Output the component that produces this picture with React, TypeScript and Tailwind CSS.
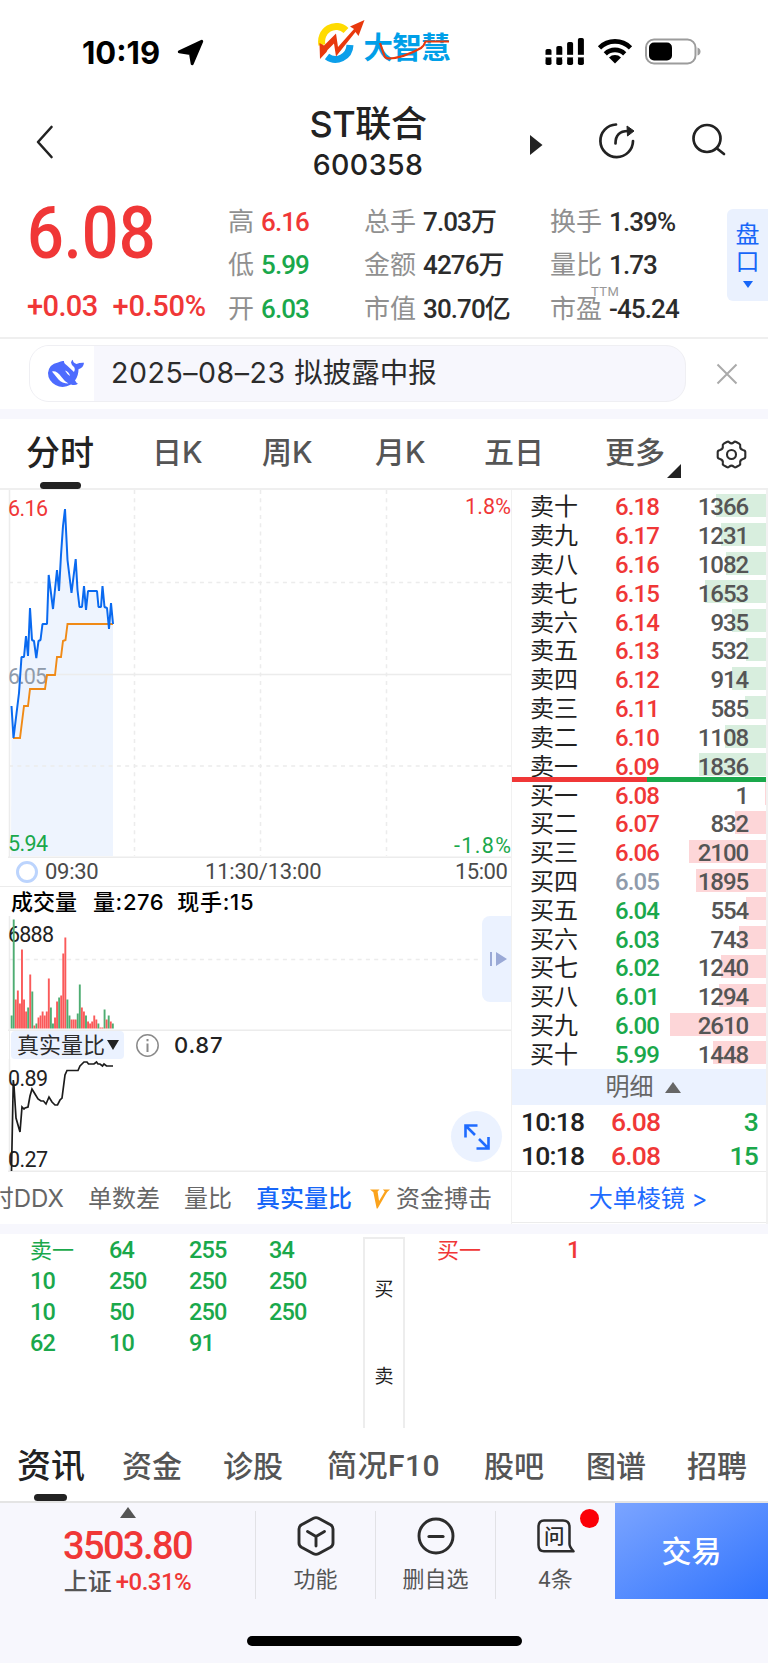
import { ReactNode } from 'react'

const RED = '#f03737'
const GREEN = '#1aa84b'

const asks = [
    ['卖十', '6.18', 1366],
    ['卖九', '6.17', 1231],
    ['卖八', '6.16', 1082],
    ['卖七', '6.15', 1653],
    ['卖六', '6.14', 935],
    ['卖五', '6.13', 532],
    ['卖四', '6.12', 914],
    ['卖三', '6.11', 585],
    ['卖二', '6.10', 1108],
    ['卖一', '6.09', 1836],
] as const

const bids = [
    ['买一', '6.08', 1],
    ['买二', '6.07', 832],
    ['买三', '6.06', 2100],
    ['买四', '6.05', 1895],
    ['买五', '6.04', 554],
    ['买六', '6.03', 743],
    ['买七', '6.02', 1240],
    ['买八', '6.01', 1294],
    ['买九', '6.00', 2610],
    ['买十', '5.99', 1448],
] as const

// sign is the direction of the minute, magnitude the bar height
const volumes = [
    -13, -109, 29, 38, 25, 79, 29, 17, -21, 54, -37, 3, -5, 11, 13, 17, 13, 17, 50, -21, -5, 11, 27, -31, 33,
    75, 91, -29, -13, 9, 9, 9, -15, -44, 21, 17, -13, 7, 5, 7, 13, 9, -5, 1, 1, -19, 9, -13, 7, -5,
]

const priceLine =
    '11.5,216 13.5,248 19,203 21.5,167 24,167 26,146 28,166 30,118 32,150 34,151 36.3,168 38.5,151 40.5,150 42.5,134 47,134 48.7,85 53,119 57,80 59,101 61,65 63,36 65,19 67.5,70 71.5,103 75.7,69 77.5,100 79.5,117 82,117 84,96 86,120 88,101 97,101 98.5,117 101,117 102.5,96 104.5,117 107,118 109,139 111,113 113,134'
const avgLine =
    '13,248 20,248 24,216 28,216 30,199 45,199 47,185 55,185 57,167 61,167 63,151 65.5,150 67.5,134 113,134'
const ratioLine =
    '11.5,141 13.3,50 14,56 16,88 20,102 22,77 24,79 25,78 28,77 30,66 32,59 35,64 38,69 41,71 43.5,71 46,74 49,67 52,72 55,75 57.5,75 60,70 62,68 65,45 67,40.5 78,40.5 80,36 84,32 87,32 88.5,34 94,34 96.5,32 98,34 100,34 102.5,36 104,34 106.5,36 113,36'

const num = "font-['Roboto','Noto_Sans_CJK_SC',sans-serif]"

function priceColor(p: string) {
    if (Number(p) > 6.05) return 'text-[#f03737]'
    return p === '6.05' ? 'text-[#8f9bab]' : 'text-[#1aa84b]'
}

function StatusBar() {
    return (
        <div className="flex h-[97px] items-start pl-[82px]">
            <span className="mt-[37px] w-[95px] text-[31px] leading-8 font-bold text-black">10:19</span>
            <svg className="mt-[39px]" width="27" height="27" viewBox="0 0 27 27">
                <path d="M24.700 2.300 15.200 24.700 13.500 14.500 2.300 12.800Z" fill="#000" stroke="#000" strokeWidth="3" strokeLinejoin="round" />
            </svg>
            <svg className="mt-[18px] ml-[114px]" width="136" height="50" viewBox="0 0 136 50">
                <path d="M4 27A14.500 15 0 0 1 28 12.500" fill="none" stroke="#ffdb00" strokeWidth="7" />
                <path d="M32 27A14.500 15 0 0 1 9 38.500" fill="none" stroke="#0c9fea" strokeWidth="7" />
                <path d="M2 41 1.500 25 6 27.500 18 15.500 20 29 36 11 32 8.500 46.500 2 40.500 18 37.500 14 18 38.500 16 25.500 9.500 32 8.500 34Z" fill="#e8380d" />
                <text x="45.500" y="40" textLength="87" className="font-['Noto_Sans_CJK_SC',sans-serif] text-[29.500px] font-bold" fill="#009fe8">大智慧</text>
                <path d="M62 25 66.500 38Q67 40 71 40.500Q85 40 103 30Q106 28 107.500 23.500H131" fill="none" stroke="#e8380d" strokeWidth="2.200" />
            </svg>
            <svg className="mt-[37px] ml-[91px]" width="40" height="29" viewBox="0 0 40 29">
                {[0, 1, 2, 3].map((i) => (
                    <g key={i}>
                        <rect x={i * 10.8 + 0.5} y={[12, 9, 5, 1][i]} width="6" height={[12, 15, 19, 23][i] - 1.5} rx="1.800" />
                        <rect x={i * 10.8 + 0.5} y="21" width="6" height="7" rx="1.800" />
                    </g>
                ))}
                <rect y="17.800" width="40" height="2.600" fill="#fff" />
            </svg>
            <svg className="mt-[38px] ml-3" width="36" height="26" viewBox="0 0 36 26">
                <g fill="none" stroke="#000" strokeWidth="4.600">
                    <path d="M2.500 9.800A22 22 0 0 1 33.500 9.800" />
                    <path d="M8.300 15.800A14 14 0 0 1 27.700 15.800" />
                </g>
                <path d="M18 25.500 12 19.500A8.500 8.500 0 0 1 24 19.500Z" />
            </svg>
            <svg className="mt-[38px] ml-3" width="56" height="27" viewBox="0 0 56 27">
                <rect x="1" y="1.500" width="49.500" height="24" rx="8" fill="none" stroke="#9c9c9c" strokeWidth="2" />
                <rect x="4" y="4.500" width="23" height="18" rx="5" />
                <path d="M52.500 9.500Q55.500 10.500 55.500 13.500T52.500 17.500Z" fill="#9c9c9c" />
            </svg>
        </div>
    )
}

function TitleBar() {
    return (
        <div className="flex h-[92px] items-start text-[#222]">
            <svg className="mt-7 ml-[35px]" width="20" height="34" viewBox="0 0 20 34">
                <path d="M16.500 2 3 17 16.500 32" fill="none" stroke="currentColor" strokeWidth="2.600" strokeLinecap="round" strokeLinejoin="round" />
            </svg>
            <div className="ml-[213px] w-[200px] text-center">
                <div className="mt-[7px] text-[36px] leading-[40px] font-medium tracking-[-0.400px]">ST联合</div>
                <div className="mt-[5px] text-[28.500px] leading-[32px] font-medium tracking-[0.400px]">600358</div>
            </div>
            <svg className="mt-[37px] ml-[62px]" width="13" height="22" viewBox="0 0 13 22">
                <path d="M0 1 12.500 11 0 21Z" fill="currentColor" />
            </svg>
            <svg className="mt-[24px] ml-[54px]" width="40" height="40" viewBox="0 0 40 40">
                <g fill="none" stroke="currentColor" strokeWidth="2.700" strokeLinecap="round" strokeLinejoin="round">
                    <path d="M19 3.500A16.300 16.300 0 1 0 36 20" />
                    <path d="M18.500 22.500Q18.500 10 31 10" />
                </g>
                <path d="M30 5 37 10 30.500 15Z" fill="currentColor" stroke="currentColor" strokeLinejoin="round" />
            </svg>
            <svg className="mt-[26px] ml-[55px]" width="36" height="36" viewBox="0 0 36 36">
                <g fill="none" stroke="currentColor" strokeWidth="2.700" strokeLinecap="round">
                    <circle cx="15" cy="15.500" r="13.500" />
                    <path d="M25 25.500 32 31" />
                </g>
            </svg>
        </div>
    )
}

function Stat({ label, value, color = 'text-[#2c2c2c]', children }: { label: string; value: string; color?: string; children?: ReactNode }) {
    return (
        <div className="relative flex h-[43.500px] items-center gap-[7px] whitespace-nowrap">
            <span className="text-[26px] text-[#909090]">{label}</span>
            <span className={`${num} text-[26px] font-medium tracking-[-0.900px] ${color}`}>{value}</span>
            {children}
        </div>
    )
}

function Quote() {
    return (
        <div className="flex h-[150px] border-b-2 border-[#efefef]">
            <div className={`${num} w-[228px] pl-[27px] text-[#f03737]`}>
                <div className="mt-[9px] origin-left scale-x-[0.900] text-[72px] leading-[72px] font-medium">6.08</div>
                <div className="mt-[20px] flex gap-[15px] text-[29px] leading-8 font-medium tracking-[-0.300px]">
                    <span className="tracking-[-0.600px]">+0.03</span>
                    <span>+0.50%</span>
                </div>
            </div>
            <div className="w-[136px] pt-[11px]">
                <Stat label="高" value="6.16" color="text-[#f03737]" />
                <Stat label="低" value="5.99" color="text-[#1aa84b]" />
                <Stat label="开" value="6.03" color="text-[#1aa84b]" />
            </div>
            <div className="w-[186px] pt-[11px]">
                <Stat label="总手" value="7.03万" />
                <Stat label="金额" value="4276万" />
                <Stat label="市值" value="30.70亿" />
            </div>
            <div className="w-[177px] pt-[11px]">
                <Stat label="换手" value="1.39%" />
                <Stat label="量比" value="1.73" />
                <Stat label="市盈" value="-45.24">
                    <span className={`${num} absolute top-[-2px] left-[41px] text-[13px] tracking-[0.500px] text-[#999]`}>TTM</span>
                </Stat>
            </div>
            <div className="mt-5 flex h-[92px] flex-1 flex-col items-center rounded-l-md bg-[#eaf1fe] pt-3 text-[24px] leading-[27px] text-[#1766f8]">
                <span>盘</span>
                <span>口</span>
                <svg className="mt-[6px]" width="10" height="7">
                    <path d="M0 0H10L5 7Z" fill="currentColor" />
                </svg>
            </div>
        </div>
    )
}

function Notice() {
    return (
        <div className="flex h-[80px] items-start border-b-10 border-[#f7f7fd] pl-[29px]">
            <div className="mt-1.5 flex h-[57px] w-[657px] items-center overflow-hidden rounded-[20px] border-[1.500px] border-[#efeff3] bg-[#f7f7fd]">
                <div className="flex h-full w-[64px] items-center justify-center bg-white pl-[7px]">
                    <svg width="38" height="30" viewBox="0 0 38 30">
                        <path
                            d="M24 3.500Q24.500 1.500 25.800.800Q26 4 29.500 5Q33 3.500 37 3.800Q36.500 9 31.500 10.300Q31.500 17 28 21.500Q29.500 24.200 31 24.800Q28 27 24 25.500Q16 30 8.500 26Q1 21.500 1 14Q2 5 11 3.500Q14.500 1.500 17 2Q16.500 4 20 6.500L27 13Q28.800 9.500 26.500 7.500Q24.500 6 24 3.500Z"
                            fill="#4d6bfe"
                        />
                        <path d="M5 12.500Q10 11.500 14.500 18Q18 23 21.500 24.500Q15 24.500 11.500 20.500Q7 15 5 12.500Z" fill="#fff" />
                        <path d="M18 11.500Q22 12.500 23 17Q20.500 16 18 11.500Z" fill="#fff" />
                    </svg>
                </div>
                <span className="ml-[17px] text-[28.500px] text-[#2c2c2c]">
                    <span className="tracking-[0.550px]">2025–08–23 </span>拟披露中报
                </span>
            </div>
            <svg className="mt-6 ml-[30px]" width="22" height="22" viewBox="0 0 22 22">
                <path d="M1.500 1.500 20.500 20.500M20.500 1.500 1.500 20.500" stroke="#aaa" strokeWidth="2" />
            </svg>
        </div>
    )
}

function PeriodTabs() {
    return (
        <div className="flex h-[71px] items-start border-b-2 border-[#efefef] pl-[26px] text-[30px] leading-[66px] whitespace-nowrap text-[#555]">
            <div className="w-[126px] text-[34px] leading-[67px] font-medium text-[#222]">
                <div className="h-[63px]">分时</div>
                <div className="ml-[14px] h-[6.500px] w-[41px] rounded-full bg-[#222]" />
            </div>
            <span className="w-[110px] font-medium">日K</span>
            <span className="w-[113px] font-medium">周K</span>
            <span className="w-[109px] font-medium">月K</span>
            <span className="w-[121px] font-medium">五日</span>
            <span className="w-[62px] font-medium">更多</span>
            <svg className="mt-[45px]" width="14" height="14">
                <path d="M14 0V14H0Z" fill="#222" />
            </svg>
            <svg className="mt-[20px] ml-[35px]" width="31" height="31" viewBox="0 0 31 31" fill="none" stroke="#2c2c2c" strokeWidth="2.100" strokeLinejoin="round">
                <path d="M10.800 3Q12.300 2.200 13.300 3.400Q15.500 5.300 17.700 3.400Q18.700 2.200 20.200 3L23.200 4.700Q24.700 5.700 24.200 7.300Q23.700 10.200 27 11Q29.300 11.500 29.300 13V18Q29.300 19.500 27 20Q23.700 20.800 24.200 23.700Q24.700 25.300 23.200 26.300L20.200 28Q18.700 28.800 17.700 27.600Q15.500 25.700 13.300 27.600Q12.300 28.800 10.800 28L7.800 26.300Q6.300 25.300 6.800 23.700Q7.300 20.800 4 20Q1.700 19.500 1.700 18V13Q1.700 11.500 4 11Q7.300 10.200 6.800 7.300Q6.300 5.700 7.800 4.700Z" />
                <circle cx="15.500" cy="15.500" r="4.500" />
            </svg>
        </div>
    )
}

function PriceChart() {
    return (
        <svg className={`${num} block text-[21.500px]`} width="511" height="368">
            <polygon points={`11,366 ${priceLine} 113,366`} fill="#eef4fe" />
            <g fill="none" stroke="#ececec" strokeWidth="1.500">
                <path d="M9.500 0V368M8 367.200H511M9 184.500H511" />
                <path d="M9 92.500H511M9 276H511M134.500 0V366M260.500 0V366M386.500 0V366" strokeDasharray="4 4.300" />
            </g>
            <text x="8" y="193.500" fill="#8f9bab" textLength="39">6.05</text>
            <polyline points={avgLine} fill="none" stroke="#f08a16" strokeWidth="1.900" />
            <polyline points={priceLine} fill="none" stroke="#0a6af0" strokeWidth="2" strokeLinejoin="bevel" />
            <text x="8" y="25.500" fill={RED} textLength="40">6.16</text>
            <text x="511" y="23.500" fill={RED} textAnchor="end" textLength="46">1.8%</text>
            <text x="8" y="361" fill={GREEN} textLength="40">5.94</text>
            <text x="511" y="363" fill={GREEN} textAnchor="end" textLength="57">-1.8%</text>
        </svg>
    )
}

function VolumeChart() {
    return (
        <svg className={`${num} block text-[21.500px]`} width="511" height="115">
            <path d="M9.500 0V115M8 114.200H511" stroke="#ececec" strokeWidth="1.500" />
            <path d="M9 43.500H511" stroke="#ececec" strokeWidth="1.500" strokeDasharray="4 4.300" />
            <text x="8" y="25.500" fill="#222" textLength="46">6888</text>
            {volumes.map((v, i) => (
                <rect key={i} x={10.7 + i * 2.065} y={112.5 - Math.abs(v)} width="1.900" height={Math.abs(v)} fill={v > 0 ? '#fa5a5a' : '#4ead72'} />
            ))}
        </svg>
    )
}

function ChartColumn() {
    return (
        <div className="relative w-[511px]">
            <PriceChart />
            <div className={`${num} flex h-[29px] items-center border-b border-[#ececec] pl-[16px] text-[22px] text-[#4a4a4a]`}>
                <span className="h-[22px] w-[22px] rounded-full border-3 border-[#bcd4fd]" />
                <span className="ml-[7px] w-[160px] tracking-[-0.300px]">09:30</span>
                <span className="w-[250px] tracking-[-0.200px]">11:30/13:00</span>
                <span className="tracking-[-0.500px]">15:00</span>
            </div>
            <div className="flex h-[29px] items-center gap-4 pl-[11px] text-[22px] font-medium text-black">
                <span>成交量</span>
                <span className="tracking-[0.600px]">量:276</span>
                <span className="-ml-[3px] tracking-[0.700px]">现手:15</span>
            </div>
            <VolumeChart />
            <div className="ml-[9px] flex h-7 items-center border-l-[1.500px] border-[#ececec] pl-px">
                <div className="flex h-7 w-[113px] items-center rounded bg-[#ebf2ff] pl-1.5 text-[22px] text-[#2c2c2c]">
                    真实量比
                    <svg className="ml-0.5" width="12" height="10">
                        <path d="M0 0H12L6 10Z" fill="#222" />
                    </svg>
                </div>
                <svg className="ml-3" width="23" height="23" fill="none" stroke="#8a8a8a" strokeWidth="1.500">
                    <circle cx="11.500" cy="11.500" r="10.700" />
                    <path d="M11.500 9.500V18M11.500 5V7.300" strokeWidth="2" />
                </svg>
                <span className="ml-[15px] text-[22px] font-medium tracking-[0.800px] text-[#222]">0.87</span>
            </div>
            <svg className={`${num} block text-[21.500px]`} width="511" height="113" viewBox="0 29 511 113">
                <path d="M9.500 29V142M8 141.200H511" stroke="#ececec" strokeWidth="1.500" />
                <text x="8" y="56" fill="#222" textLength="40">0.89</text>
                <text x="8" y="137" fill="#222" textLength="40">0.27</text>
                <polyline points={ratioLine} fill="none" stroke="#1c1c1c" strokeWidth="1.700" />
            </svg>
            <div className="flex h-[53px] items-center justify-end overflow-hidden pr-[19px] text-[24px] whitespace-nowrap text-[#666]">
                <span className="shrink-0">时DDX</span>
                <span className="ml-6 shrink-0">单数差</span>
                <span className="ml-6 shrink-0">量比</span>
                <span className="ml-6 shrink-0 font-medium text-[#1766f8]">真实量比</span>
                <svg className="ml-[18px] shrink-0" width="20" height="20" viewBox="0 0 21 20">
                    <path d="M0 0H10L8 2 9.500 12 15.500 2 13.500 0H21Q18 2 16 6L8 20H7L3.500 3Z" fill="#fba31c" />
                </svg>
                <span className="ml-[6px] shrink-0">资金搏击</span>
            </div>
            {/* side panel toggle */}
            <div className="absolute top-[426px] right-0 flex h-[86px] w-[29px] items-center rounded-l-lg bg-[#ebf2ff] pl-2">
                <svg width="17" height="14" fill="#9aa9d6">
                    <path d="M0 0H2V14H0ZM6 0 17 7 6 14Z" />
                </svg>
            </div>
            {/* fullscreen */}
            <div className="absolute top-[621px] right-[9px] flex h-[51px] w-[51px] items-center justify-center rounded-full bg-[#ebf2ff]">
                <svg width="28" height="28" viewBox="0 0 28 28" fill="none" stroke="#1f6bff" strokeWidth="2.600">
                    <path d="M14.500 2.500H2.500V14.500M2.500 2.500 12 12M25.500 14V25.500H13.500M16 16 25.500 25.500" />
                </svg>
            </div>
        </div>
    )
}

function BookRow({ row, bar }: { row: readonly [string, string, number]; bar: string }) {
    return (
        <div className="relative flex h-[28.820px] items-center pl-[18px]">
            <div className={`absolute top-px right-0 h-[23px] ${bar}`} style={{ width: Math.max(1, row[2] * 0.0367) }} />
            <span className="relative w-[85px] text-[24px] text-[#222]">{row[0]}</span>
            <span className={`${num} relative w-[60px] text-[24px] font-medium tracking-[-0.900px] ${priceColor(row[1])}`}>{row[1]}</span>
            <span className={`${num} relative flex-1 pr-[18px] text-right text-[24px] font-medium tracking-[-1.100px] text-[#555]`}>{row[2]}</span>
        </div>
    )
}

function OrderBook() {
    return (
        <div className="w-[257px] border-r-2 border-l border-[#f1f1f1]">
            <div className="relative pt-[3px]">
                {asks.map((r) => (
                    <BookRow key={r[0]} row={r} bar="bg-[#d8eede]" />
                ))}
                <div className="absolute bottom-[-1px] left-0 z-10 flex h-[5px] w-full">
                    <div className="w-[135px] bg-[#f03737]" />
                    <div className="flex-1 bg-[#1aa84b]" />
                </div>
            </div>
            {bids.map((r) => (
                <BookRow key={r[0]} row={r} bar="bg-[#fdd6d8]" />
            ))}
            <div className="flex h-9 items-center justify-center gap-[11px] bg-[#ebf2ff] pl-2 text-[24px] text-[#666]">
                明细
                <svg width="16" height="11">
                    <path d="M0 11H16L8 0Z" fill="currentColor" />
                </svg>
            </div>
            <div className={`${num} h-[67px] border-b border-[#ececec] text-[26.500px] font-medium tracking-[-0.800px]`}>
                {['3', '15'].map((n) => (
                    <div key={n} className="flex h-[34px] items-center pr-2 pl-[9px]">
                        <span className="w-[90px] text-[#222]">10:18</span>
                        <span className="text-[#f03737]">6.08</span>
                        <span className="flex-1 text-right text-[#1aa84b]">{n}</span>
                    </div>
                ))}
            </div>
            <div className="flex h-[51px] items-center justify-center border-b border-[#ececec] pt-1 pl-[18px] text-[24px] text-[#1f6bff]">大单棱镜 &gt;</div>
        </div>
    )
}

function Queues() {
    const cells = ['64', '255', '34', '10', '250', '250', '250', '10', '50', '250', '250', '62', '10', '91']
    return (
        <div className={`${num} flex h-[204px] items-start border-t-10 border-[#f7f7fd] text-[23.500px] font-medium`}>
            <div className="grid w-[363px] auto-rows-[31px] grid-cols-[79px_80px_80px_80px] items-center pt-[1px] pl-[30px] text-[#1aa84b]">
                <span className="text-[22px] font-normal">卖一</span>
                {cells.map((c, i) => (
                    <span key={i} className="tracking-[-0.900px]">{c}</span>
                ))}
            </div>
            <div className="mt-[3px] flex h-[191px] w-[42px] flex-col items-center border-2 border-b-0 border-[#ededed] text-[19px] font-normal text-[#222]">
                <span className="mt-[41px]">买</span>
                <span className="mt-[68px]">卖</span>
            </div>
            <div className="flex h-[31px] items-center pt-[3px] pl-8 text-[#f03737]">
                <span className="w-[130px] text-[22px] font-normal">买一</span>
                <span>1</span>
            </div>
        </div>
    )
}

function InfoTabs() {
    return (
        <div className="flex h-[75px] items-start border-b-2 border-[#e4e4e4] pl-[17px] text-[30px] leading-[76px] font-medium whitespace-nowrap text-[#555]">
            <div className="w-[105px] text-[34px] text-[#222]">
                <div className="h-[66px]">资讯</div>
                <div className="ml-[17px] h-[7px] w-[33px] rounded-full bg-[#222]" />
            </div>
            <span className="w-[101px]">资金</span>
            <span className="w-[104px]">诊股</span>
            <span className={`${num} w-[157px] tracking-[0.500px]`}>简况F10</span>
            <span className="w-[102px]">股吧</span>
            <span className="w-[101px]">图谱</span>
            <span>招聘</span>
        </div>
    )
}

function Action({ label, children }: { label: ReactNode; children: ReactNode }) {
    return (
        <div className="relative mt-2 flex h-[88px] w-[120px] flex-col items-center border-l border-[#e2e2e6] text-[22px] text-[#555]">
            <div className="mt-[5px] flex h-[40px] items-center">{children}</div>
            <span className="mt-3">{label}</span>
        </div>
    )
}

function BottomBar() {
    return (
        <div className="h-[160px] bg-[#f7f7fd]">
            <div className="flex h-[96px]">
                <div className={`${num} flex w-[255px] flex-col items-center pt-[4px] font-medium text-[#f03737]`}>
                    <svg width="16" height="11">
                        <path d="M0 11H16L8 0Z" fill="#555" />
                    </svg>
                    <div className="mt-[9px] text-[38px] tracking-[-1.600px]">3503.80</div>
                    <div className="mt-[5px] flex items-center gap-1 text-[24px]">
                        <span className="text-[#555]">上证</span>
                        <span className="tracking-[-0.500px]">+0.31%</span>
                    </div>
                </div>
                <Action label="功能">
                    <svg width="38" height="40" viewBox="0 0 38 40" fill="none" stroke="#2c2c2c" strokeWidth="2.900" strokeLinejoin="round" strokeLinecap="round">
                        <path d="M16.500 2.300Q19 1 21.500 2.300L33.500 8.800Q36 10.300 36 13V27Q36 29.700 33.500 31.200L21.500 37.700Q19 39 16.500 37.700L4.500 31.200Q2 29.700 2 27V13Q2 10.300 4.500 8.800Z" />
                        <path d="M10.500 15.500 19 20.500 27.500 15.500M19 20.500V30" />
                    </svg>
                </Action>
                <Action label="删自选">
                    <svg width="38" height="38" viewBox="0 0 38 38" fill="none" stroke="#2c2c2c" strokeWidth="2.900">
                        <circle cx="19" cy="19" r="17" />
                        <path d="M12 19.500H26" strokeWidth="3.200" strokeLinecap="round" />
                    </svg>
                </Action>
                <Action label={<span className="font-['Roboto','Noto_Sans_CJK_SC',sans-serif]">4条</span>}>
                    <svg width="38" height="34" viewBox="0 0 38 34" fill="none" stroke="#2c2c2c">
                        <path d="M7 1.500H26Q32.500 1.500 32.500 8V25Q32.500 28 36.500 32.300H7Q1.500 32.300 1.500 26V8Q1.500 1.500 7 1.500Z" strokeWidth="2.500" strokeLinejoin="round" />
                        <text x="7" y="24.500" className="font-['Noto_Sans_CJK_SC',sans-serif] text-[20.500px] font-medium" fill="#2c2c2c" stroke="none">问</text>
                    </svg>
                    <span className="absolute top-[-2px] right-[16px] h-[19px] w-[19px] rounded-full bg-[#fb0007]" />
                </Action>
                <div className="flex flex-1 items-center justify-center bg-linear-to-br from-[#7ba4ff] to-[#2f73fd] text-[30px] font-medium text-white">交易</div>
            </div>
            <div className="mx-auto mt-[37px] h-[10px] w-[275px] rounded-full bg-black" />
        </div>
    )
}

export default function App() {
    return (
        <div className="h-[1663px] w-[768px] overflow-hidden bg-white font-['Inter','Noto_Sans_CJK_SC',sans-serif] leading-none">
            <StatusBar />
            <TitleBar />
            <Quote />
            <Notice />
            <PeriodTabs />
            <div className="flex h-[734px]">
                <ChartColumn />
                <OrderBook />
            </div>
            <Queues />
            <InfoTabs />
            <BottomBar />
        </div>
    )
}
